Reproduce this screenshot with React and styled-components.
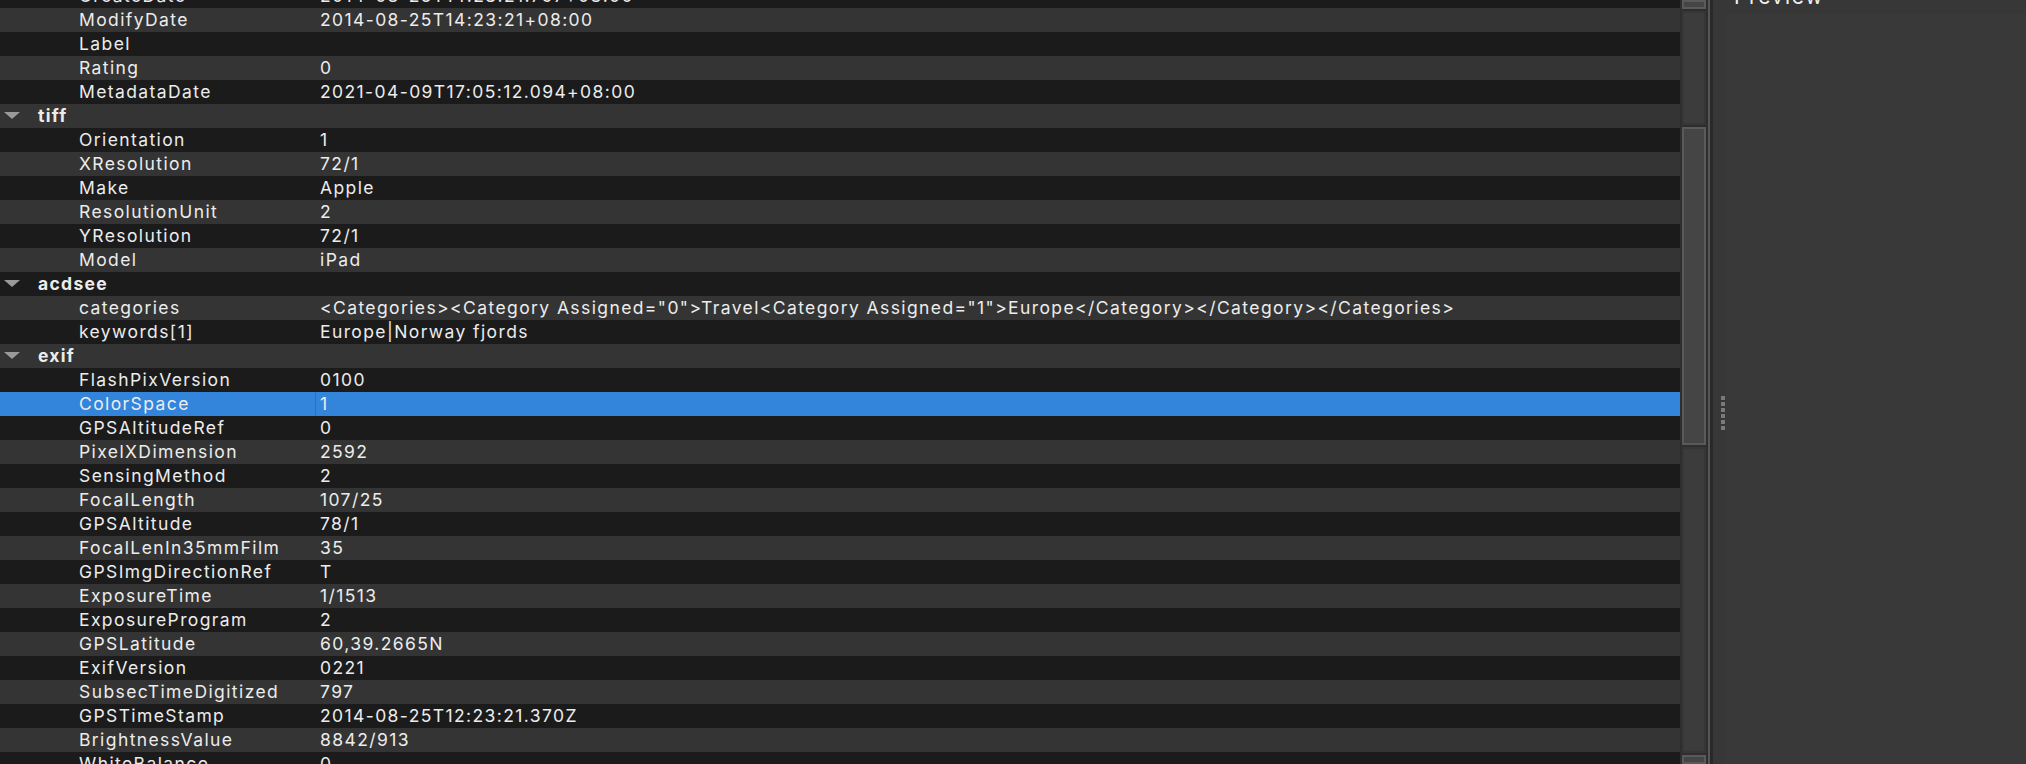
import React from "react";
import styled, { createGlobalStyle } from "styled-components";

const Global = createGlobalStyle`
  html, body { margin: 0; padding: 0; background: #373737; }
  body { font-family: Inter, "Noto Sans", "Liberation Sans", sans-serif; }
  #root { height: 764px; }
`;

const Window = styled.div`
  display: flex;
  width: 2026px;
  height: 764px;
  overflow: hidden;
  background: #373737;
`;

const TableArea = styled.div`
  width: 1680px;
  height: 764px;
  overflow: hidden;
  flex: none;
`;

const List = styled.div`
  margin-top: -16px;
  display: flex;
  flex-direction: column;
`;

const Row = styled.div`
  display: grid;
  grid-template-columns: 315px 1fr;
  height: 24px;
  line-height: 24px;
  font-size: 17.5px;
  letter-spacing: 1.4px;
  color: #ececec;
  white-space: nowrap;
  background: ${(p) => (p.$selected ? "#3385dc" : p.$odd ? "#343434" : "#1b1b1b")};
`;

const KeyCell = styled.div`
  padding-left: 79px;
  overflow: hidden;
`;

const ValueCell = styled.div`
  padding-left: 5px;
  overflow: hidden;
  ${(p) => p.$selected && `box-shadow: inset 1px 0 0 #2a6fba;`}
`;

const GroupCell = styled.div`
  display: flex;
  align-items: center;
  gap: 18px;
  padding-left: 4px;
  font-weight: 700;
  letter-spacing: 1.3px;
`;

const Triangle = styled.span`
  width: 0;
  height: 0;
  border-left: 8px solid transparent;
  border-right: 8px solid transparent;
  border-top: 7px solid #9a9a9a;
  margin-top: -1px;
`;

const ScrollBar = styled.div`
  width: 28px;
  flex: none;
  height: 764px;
  background: #2e2e2e;
  display: flex;
  flex-direction: column;
  gap: 2px;
  padding: 0 2px 0 2px;
  box-sizing: border-box;
`;

const Piece = styled.div`
  box-sizing: border-box;
  height: ${(p) => p.$h}px;
  flex: ${(p) => (p.$grow ? "1" : "none")};
  background: ${(p) => (p.$thumb ? "#454545" : "#3c3c3c")};
  border: 2px solid ${(p) => (p.$thumb ? "#5a5a5a" : "#363636")};
`;

const Splitter = styled.div`
  width: 5px;
  flex: none;
  display: flex;
`;

const SplitLight = styled.div`
  width: 2px;
  background: #565656;
`;

const SplitDark = styled.div`
  width: 3px;
  background: #292929;
`;

const Panel = styled.div`
  flex: 1;
  display: flex;
  flex-direction: column;
  background: #373737;
  position: relative;
`;

const PanelTitle = styled.div`
  height: 14px;
  padding-left: 21px;
  font-size: 21px;
  line-height: 21px;
  color: #f2f2f2;
  overflow: hidden;
  position: relative;
`;

const TitleText = styled.span`
  position: relative;
  top: -14px;
  letter-spacing: 1.6px;
`;

const PanelBody = styled.div`
  flex: 1;
  margin-left: 13px;
  background: #393939;
`;

const Grip = styled.div`
  position: absolute;
  left: 8px;
  top: 396px;
  display: flex;
  flex-direction: column;
  gap: 2px;
`;

const Dot = styled.span`
  width: 4px;
  height: 4px;
  background: #7a7a7a;
`;

const data = [
  ["CreateDate", "2014-08-25T14:23:21.797+08:00"],
  ["ModifyDate", "2014-08-25T14:23:21+08:00"],
  ["Label", ""],
  ["Rating", "0"],
  ["MetadataDate", "2021-04-09T17:05:12.094+08:00"],
  ["#tiff"],
  ["Orientation", "1"],
  ["XResolution", "72/1"],
  ["Make", "Apple"],
  ["ResolutionUnit", "2"],
  ["YResolution", "72/1"],
  ["Model", "iPad"],
  ["#acdsee"],
  [
    "categories",
    '<Categories><Category Assigned="0">Travel<Category Assigned="1">Europe</Category></Category></Categories>',
  ],
  ["keywords[1]", "Europe|Norway fjords"],
  ["#exif"],
  ["FlashPixVersion", "0100"],
  ["ColorSpace", "1", true],
  ["GPSAltitudeRef", "0"],
  ["PixelXDimension", "2592"],
  ["SensingMethod", "2"],
  ["FocalLength", "107/25"],
  ["GPSAltitude", "78/1"],
  ["FocalLenIn35mmFilm", "35"],
  ["GPSImgDirectionRef", "T"],
  ["ExposureTime", "1/1513"],
  ["ExposureProgram", "2"],
  ["GPSLatitude", "60,39.2665N"],
  ["ExifVersion", "0221"],
  ["SubsecTimeDigitized", "797"],
  ["GPSTimeStamp", "2014-08-25T12:23:21.370Z"],
  ["BrightnessValue", "8842/913"],
  ["WhiteBalance", "0"],
];

export default function App() {
  return (
    <>
      <Global />
      <Window>
        <TableArea>
          <List>
            {data.map(([k, v, sel], i) => {
              const odd = i % 2 === 1;
              if (k.startsWith("#")) {
                return (
                  <Row key={i} $odd={odd}>
                    <GroupCell>
                      <Triangle />
                      {k.slice(1)}
                    </GroupCell>
                    <ValueCell />
                  </Row>
                );
              }
              return (
                <Row key={i} $odd={odd} $selected={sel}>
                  <KeyCell>{k}</KeyCell>
                  <ValueCell $selected={sel}>{v}</ValueCell>
                </Row>
              );
            })}
          </List>
        </TableArea>
        <ScrollBar>
          <Piece $h={9} $thumb />
          <Piece $h={114} />
          <Piece $h={318} $thumb />
          <Piece $grow />
          <Piece $h={9} $thumb />
        </ScrollBar>
        <Splitter>
          <SplitLight />
          <SplitDark />
        </Splitter>
        <Panel>
          <PanelTitle>
            <TitleText>Preview</TitleText>
          </PanelTitle>
          <PanelBody />
          <Grip>
            {Array.from({ length: 6 }).map((_, i) => (
              <Dot key={i} />
            ))}
          </Grip>
        </Panel>
      </Window>
    </>
  );
}
